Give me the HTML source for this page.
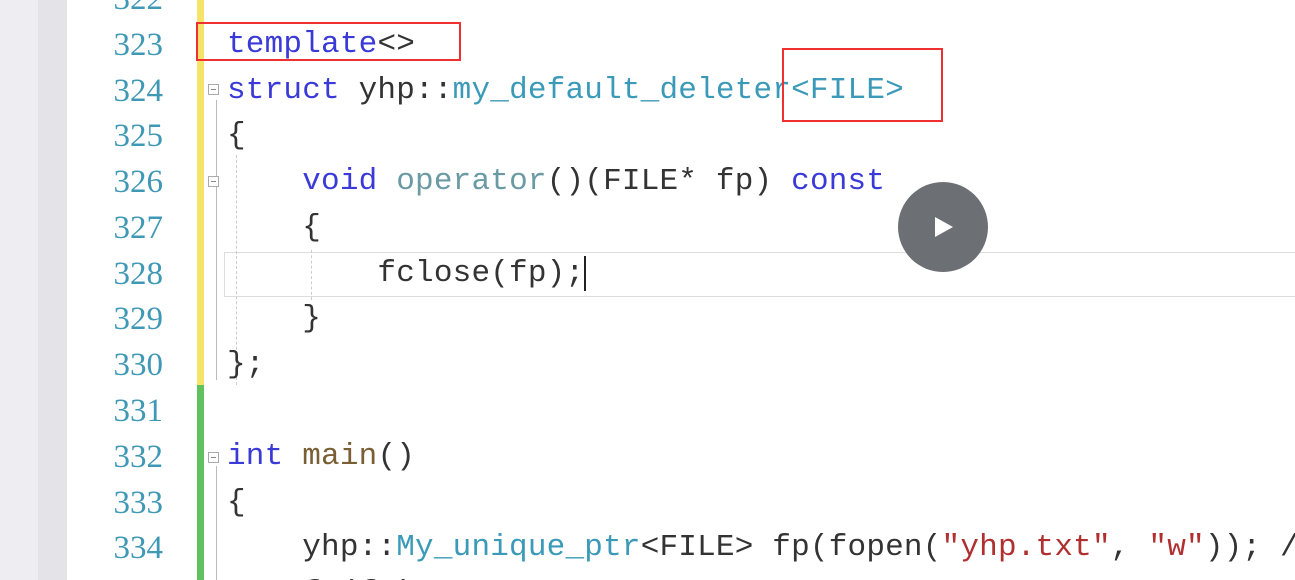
<!DOCTYPE html><html style="margin:0;width:1295px;height:580px;overflow:hidden"><head><style>
body{margin:0;width:1295px;height:580px;overflow:hidden;background:#fff;position:relative;font-family:"Liberation Mono","Noto Sans CJK SC",monospace;}
.l{position:absolute;left:0;width:1295px;height:46px;line-height:46px;font-size:31px;white-space:pre;}
.n{position:absolute;right:1132px;color:#3f98b5;font-family:"Liberation Serif",serif;font-size:33px;}
.c{position:absolute;left:227px;color:#333;letter-spacing:0.2px}
.k{color:#3a3ad8}.t{color:#3a9ab8}.f{color:#7a5f35}.s{color:#b03030}.o{color:#6a9aa3}
.fold{position:absolute;left:208px;width:9px;height:9px;border:1px solid #aaa;background:#fff;font-size:0}
.fold::after{content:"";position:absolute;left:2px;top:4px;width:5px;height:1px;background:#888}
</style></head><body>
<div style="position:absolute;left:0;top:0;width:38px;height:580px;background:#eeeef2"></div>
<div style="position:absolute;left:38px;top:0;width:29px;height:580px;background:#e4e4e8"></div>
<div style="position:absolute;left:197px;top:0;width:7px;height:385px;background:#f5e36a"></div>
<div style="position:absolute;left:197px;top:385px;width:7px;height:195px;background:#5fc25f"></div>
<div style="position:absolute;left:224px;top:252px;width:1080px;height:43px;border:1px solid #ddd"></div>
<div style="position:absolute;left:216px;top:100px;width:1px;height:280px;background:#bbb"></div>
<div style="position:absolute;left:216px;top:466px;width:1px;height:114px;background:#bbb"></div>
<div style="position:absolute;left:236px;top:155px;width:0;height:230px;border-left:1px dashed #ccc"></div>
<div style="position:absolute;left:311px;top:250px;width:0;height:50px;border-left:1px dashed #ccc"></div>
<div class="fold" style="top:84px"></div><div class="fold" style="top:176px"></div><div class="fold" style="top:452px"></div>

<div class="l" style="top:-24px"><span class="n">322</span></div>
<div class="l" style="top:22px"><span class="n">323</span><span class="c"><span class="k">template</span>&lt;&gt;</span></div>
<div class="l" style="top:68px"><span class="n">324</span><span class="c"><span class="k">struct</span> yhp::<span class="t">my_default_deleter&lt;FILE&gt;</span></span></div>
<div class="l" style="top:113px"><span class="n">325</span><span class="c">{</span></div>
<div class="l" style="top:159px"><span class="n">326</span><span class="c">    <span class="k">void</span> <span class="o">operator</span>()(FILE* fp) <span class="k">const</span></span></div>
<div class="l" style="top:205px"><span class="n">327</span><span class="c">    {</span></div>
<div class="l" style="top:251px"><span class="n">328</span><span class="c">        fclose(fp);<span style="border-left:2px solid #222"></span></span></div>
<div class="l" style="top:296px"><span class="n">329</span><span class="c">    }</span></div>
<div class="l" style="top:342px"><span class="n">330</span><span class="c">};</span></div>
<div class="l" style="top:388px"><span class="n">331</span></div>
<div class="l" style="top:434px"><span class="n">332</span><span class="c"><span class="k">int</span> <span class="f">main</span>()</span></div>
<div class="l" style="top:480px"><span class="n">333</span><span class="c">{</span></div>
<div class="l" style="top:525px"><span class="n">334</span><span class="c">    yhp::<span class="t">My_unique_ptr</span>&lt;FILE&gt; fp(fopen(<span class="s">"yhp.txt"</span>, <span class="s">"w"</span>)); /</span></div>
<div class="l" style="top:560px;height:20px;overflow:hidden"><span class="c" style="top:11px">    fp(fp)</span></div>

<div style="position:absolute;left:196px;top:22px;width:261px;height:35px;border:2px solid #f03030"></div>
<div style="position:absolute;left:782px;top:48px;width:157px;height:70px;border:2px solid #f03030"></div>
<div style="position:absolute;left:898px;top:182px;width:90px;height:90px;border-radius:50%;background:#6c6f73"></div>
<svg style="position:absolute;left:898px;top:182px" width="90" height="90"><path d="M37 35 L55 45 L37 55 Z" fill="#fff"/></svg>
</body></html>
